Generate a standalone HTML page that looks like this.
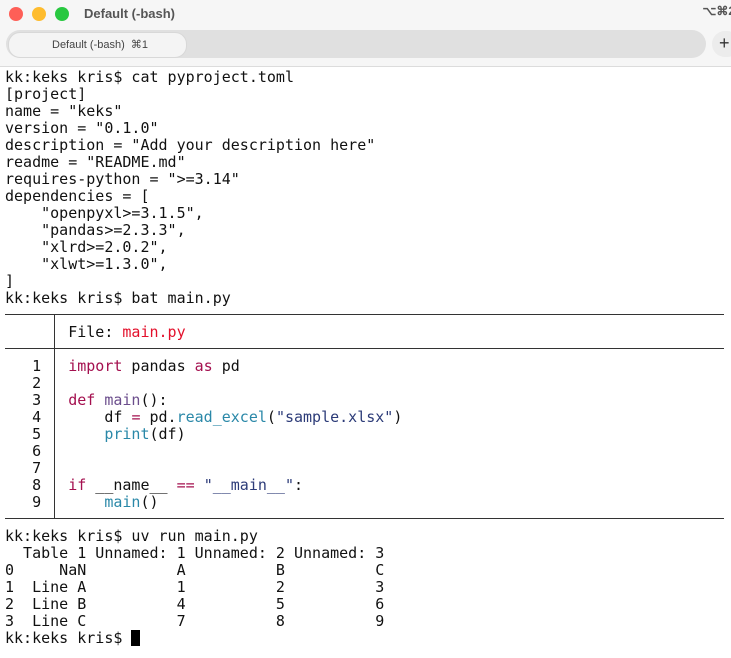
<!DOCTYPE html>
<html><head><meta charset="utf-8"><style>
body{margin:0;width:731px;height:658px;background:#fff;position:relative;overflow:hidden;font-family:"Liberation Sans",sans-serif}
.tb{position:absolute;left:0;top:0;width:731px;height:66px;background:#f6f6f6;border-bottom:1px solid #dcdcdc}
.dot{position:absolute;top:7px;width:14px;height:14px;border-radius:50%}
.title{position:absolute;left:84px;top:6px;font-size:13px;font-weight:bold;color:#555}
.sc{position:absolute;right:-4px;top:4px;font-size:12px;color:#555;font-weight:bold}
.tabbar{position:absolute;left:6px;top:30px;width:700px;height:28px;border-radius:14px;background:#e0e0e0}
.tab{position:absolute;left:8px;top:32px;width:177px;height:24px;border-radius:12px;background:#f4f4f4;border:1px solid #d8d8d8;font-size:11px;color:#444;line-height:24px;text-indent:43px}
.plus{position:absolute;left:712px;top:31px;width:28px;height:26px;border-radius:13px;background:#ececec;font-size:18px;line-height:25px;text-indent:7px;color:#333}
pre{position:absolute;left:5px;top:69px;margin:0;font-family:"DejaVu Sans Mono","Liberation Mono",monospace;font-size:15px;line-height:17px;color:#111;letter-spacing:0}
.hl{position:absolute;left:5px;width:719px;height:1px;background:#333}
.k{color:#a4104f}.f{color:#6b4d8c}.b{color:#2a88a8}.s{color:#2c3b78}.r{color:#e3102b}
.cur{display:inline-block;width:9px;height:16px;background:#000;vertical-align:-3px}
</style></head><body>
<div class="tb">
<div class="dot" style="left:9px;background:#fe5f57"></div>
<div class="dot" style="left:32px;background:#febc2e"></div>
<div class="dot" style="left:55px;background:#28c840"></div>
<div class="title">Default (-bash)</div>
<div class="sc">⌥⌘2</div>
<div class="tabbar"></div>
<div class="tab">Default (-bash) &nbsp;⌘1</div>
<div class="plus">+</div>
</div>
<div class="hl" style="top:314px"></div>
<div class="hl" style="top:348px"></div>
<div class="hl" style="top:518px"></div>
<div style="position:absolute;left:54px;top:314px;width:1px;height:205px;background:#333"></div>
<pre>kk:keks kris$ cat pyproject.toml
[project]
name = "keks"
version = "0.1.0"
description = "Add your description here"
readme = "README.md"
requires-python = "&gt;=3.14"
dependencies = [
    "openpyxl&gt;=3.1.5",
    "pandas&gt;=2.3.3",
    "xlrd&gt;=2.0.2",
    "xlwt&gt;=1.3.0",
]
kk:keks kris$ bat main.py

       File: <span class="r">main.py</span>

   1   <span class="k">import</span> pandas <span class="k">as</span> pd
   2
   3   <span class="k">def</span> <span class="f">main</span>():
   4       df <span class="k">=</span> pd.<span class="b">read_excel</span>(<span class="s">"sample.xlsx"</span>)
   5       <span class="b">print</span>(df)
   6
   7
   8   <span class="k">if</span> __name__ <span class="k">==</span> <span class="s">"__main__"</span>:
   9       <span class="b">main</span>()

kk:keks kris$ uv run main.py
  Table 1 Unnamed: 1 Unnamed: 2 Unnamed: 3
0     NaN          A          B          C
1  Line A          1          2          3
2  Line B          4          5          6
3  Line C          7          8          9
kk:keks kris$ <span class="cur"></span></pre>
</body></html>
